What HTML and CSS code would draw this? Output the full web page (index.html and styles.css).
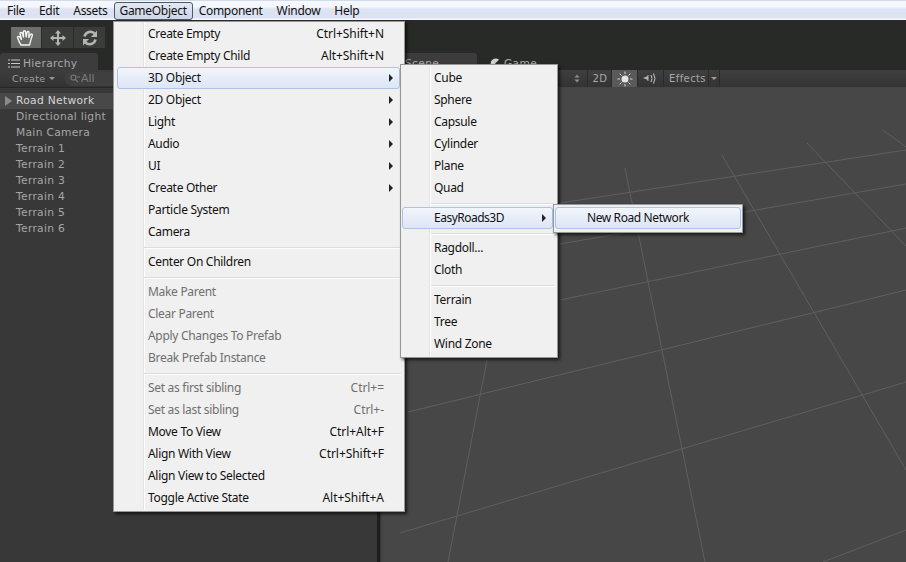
FILE: index.html
```html
<!DOCTYPE html>
<html lang="en">
<head>
<meta charset="utf-8">
<title>Unity GameObject menu</title>
<link rel="stylesheet" href="styles.css">
</head>
<body>
<div class="app">
  <header class="menubar">
    <span class="mb-item">File</span>
    <span class="mb-item">Edit</span>
    <span class="mb-item">Assets</span>
    <span class="mb-item mb-open">GameObject</span>
    <span class="mb-item">Component</span>
    <span class="mb-item">Window</span>
    <span class="mb-item">Help</span>
  </header>

  <div class="toolbar">
    <div class="tool tool-on">
      <svg width="20" height="20" viewBox="0 0 20 20"><path d="M5 17 C3 14 2 11 1.500 9.500 C1.500 8 3.500 8 4.500 10 L5.500 11.500 L4 5.500 C4 4 5.800 4 6.200 5.300 L7.500 9 L7.300 3.800 C7.500 2.300 9.300 2.400 9.500 3.800 L10.200 9 L11 4.300 C11.300 3 13 3.200 13 4.600 L12.800 9.500 L14.500 6.500 C15.300 5.500 16.800 6.200 16.300 7.500 L14.800 12 C14.500 14 14 15.500 13.500 17 Z" fill="none" stroke="#f2f2f2" stroke-width="1.400" stroke-linejoin="round"/></svg>
    </div>
    <div class="tool">
      <svg width="18" height="18" viewBox="0 0 18 18"><path d="M9 1 L12 4.500 H10 V8 H13.500 V6 L17 9 L13.500 12 V10 H10 V13.500 H12 L9 17 L6 13.500 H8 V10 H4.500 V12 L1 9 L4.500 6 V8 H8 V4.500 H6 Z" fill="#b4b4b4"/></svg>
    </div>
    <div class="tool">
      <svg width="18" height="18" viewBox="0 0 18 18"><path d="M3.500 7.500 A6 6 0 0 1 14 5" fill="none" stroke="#b4b4b4" stroke-width="2.600"/><path d="M16 1.500 V8 H10 Z" fill="#b4b4b4"/><path d="M14.500 10.500 A6 6 0 0 1 4 13" fill="none" stroke="#b4b4b4" stroke-width="2.600"/><path d="M2 16.500 V10 H8 Z" fill="#b4b4b4"/></svg>
    </div>
  </div>

  <main class="panels">
    <section class="hierarchy">
      <div class="tabstrip">
        <div class="tab tab-h">
          <svg width="12" height="9" viewBox="0 0 12 9"><path d="M3 1 H12 M3 4.500 H12 M3 8 H12" stroke="#c8c8c8" fill="none"/><path d="M0 1 H2 M0 4.500 H2 M0 8 H2" stroke="#c8c8c8" fill="none"/></svg>
          <span>Hierarchy</span>
        </div>
      </div>
      <div class="h-bar">
        <span class="create">Create <i class="caret"></i></span>
        <span class="search">
          <svg width="10" height="9" viewBox="0 0 10 9"><circle cx="3.500" cy="3.500" r="2.500" fill="none" stroke="#7a7a7a" stroke-width="1.200"/><path d="M5.500 5.500 L8 8 M7 3 H10" stroke="#7a7a7a" stroke-width="1.200"/></svg>
          All
        </span>
      </div>
      <ul class="tree">
        <li class="tree-row tree-sel"><i class="tree-arrow"></i>Road Network</li>
        <li class="tree-row">Directional light</li>
        <li class="tree-row">Main Camera</li>
        <li class="tree-row">Terrain 1</li>
        <li class="tree-row">Terrain 2</li>
        <li class="tree-row">Terrain 3</li>
        <li class="tree-row">Terrain 4</li>
        <li class="tree-row">Terrain 5</li>
        <li class="tree-row">Terrain 6</li>
      </ul>
    </section>

    <section class="scene">
      <div class="tabstrip tabstrip-scene">
        <div class="tab tab-scene">Scene</div>
        <div class="tab-game">
          <svg width="10" height="11" viewBox="0 0 10 11"><path d="M9 1.800 A5 5 0 1 0 9 9.200 L5 5.500 Z" fill="#d0d0d0"/></svg>
          <span>Game</span>
        </div>
      </div>
      <div class="s-bar">
        <span class="s-updown">
          <svg width="6" height="9" viewBox="0 0 6 9"><path d="M3 0.500 L5.500 3.500 H0.500 Z M3 8.500 L5.500 5.500 H0.500 Z" fill="#8d8d8d"/></svg>
        </span>
        <span class="s-btn s-2d">2D</span>
        <span class="s-btn s-sun">
          <svg width="16" height="16" viewBox="0 0 16 16"><circle cx="8" cy="8" r="3.500" fill="#e6e6e6"/><path d="M8 0.500 V3 M8 13 V15.500 M0.500 8 H3 M13 8 H15.500 M2.700 2.700 L4.500 4.500 M11.500 11.500 L13.300 13.300 M2.700 13.300 L4.500 11.500 M11.500 4.500 L13.300 2.700" stroke="#d8d8d8"/></svg>
        </span>
        <span class="s-btn s-audio">
          <svg width="15" height="13" viewBox="0 0 15 13"><path d="M0 6 L5 4 V8 Z" fill="#b4b4b4"/><path d="M5 3 V9" stroke="#b4b4b4"/><path d="M8 3 Q10 6.500 8 10 M10.500 1.500 Q13.500 6.500 10.500 11.500" fill="none" stroke="#c8c8c8"/></svg>
        </span>
        <span class="s-btn s-effects">Effects</span>
        <span class="s-btn s-caret"><i class="caret"></i></span>
      </div>
      <div class="viewport">
        <svg class="grid" viewBox="380 87 526 475" width="526" height="475">
          <g stroke="#5f5f5f" stroke-width="1" fill="none">
            <path d="M560 203 L906 150"/>
            <path d="M560 244 L906 184"/>
            <path d="M560 300 L906 228"/>
            <path d="M408 412 L906 290"/>
            <path d="M400 533 L906 382"/>
            <path d="M823 562 L906 530"/>
            <path d="M487 360 L448 562"/>
            <path d="M625 168 L705 562"/>
            <path d="M722 155 L906 470"/>
            <path d="M807 143 L906 246"/>
            <path d="M883 130 L906 147"/>
          </g>
        </svg>
      </div>
    </section>
  </main>

  <nav class="menu menu-main">
    <div class="mi"><span>Create Empty</span><span class="sc">Ctrl+Shift+N</span></div>
    <div class="mi"><span>Create Empty Child</span><span class="sc">Alt+Shift+N</span></div>
    <div class="mi mi-hot"><span>3D Object</span><i class="sub"></i></div>
    <div class="mi"><span>2D Object</span><i class="sub"></i></div>
    <div class="mi"><span>Light</span><i class="sub"></i></div>
    <div class="mi"><span>Audio</span><i class="sub"></i></div>
    <div class="mi"><span>UI</span><i class="sub"></i></div>
    <div class="mi"><span>Create Other</span><i class="sub"></i></div>
    <div class="mi"><span>Particle System</span></div>
    <div class="mi"><span>Camera</span></div>
    <div class="sep"></div>
    <div class="mi"><span>Center On Children</span></div>
    <div class="sep"></div>
    <div class="mi mi-off"><span>Make Parent</span></div>
    <div class="mi mi-off"><span>Clear Parent</span></div>
    <div class="mi mi-off"><span>Apply Changes To Prefab</span></div>
    <div class="mi mi-off"><span>Break Prefab Instance</span></div>
    <div class="sep"></div>
    <div class="mi mi-off"><span>Set as first sibling</span><span class="sc">Ctrl+=</span></div>
    <div class="mi mi-off"><span>Set as last sibling</span><span class="sc">Ctrl+-</span></div>
    <div class="mi"><span>Move To View</span><span class="sc">Ctrl+Alt+F</span></div>
    <div class="mi"><span>Align With View</span><span class="sc">Ctrl+Shift+F</span></div>
    <div class="mi"><span>Align View to Selected</span></div>
    <div class="mi"><span>Toggle Active State</span><span class="sc">Alt+Shift+A</span></div>
  </nav>

  <nav class="menu menu-3d">
    <div class="mi"><span>Cube</span></div>
    <div class="mi"><span>Sphere</span></div>
    <div class="mi"><span>Capsule</span></div>
    <div class="mi"><span>Cylinder</span></div>
    <div class="mi"><span>Plane</span></div>
    <div class="mi"><span>Quad</span></div>
    <div class="sep"></div>
    <div class="mi mi-hot"><span>EasyRoads3D</span><i class="sub"></i></div>
    <div class="sep"></div>
    <div class="mi"><span>Ragdoll...</span></div>
    <div class="mi"><span>Cloth</span></div>
    <div class="sep"></div>
    <div class="mi"><span>Terrain</span></div>
    <div class="mi"><span>Tree</span></div>
    <div class="mi"><span>Wind Zone</span></div>
  </nav>

  <nav class="menu menu-road">
    <div class="mi mi-hot"><span>New Road Network</span></div>
  </nav>
</div>
</body>
</html>
```
FILE: styles.css
```css
* { box-sizing: border-box; }
html, body { margin: 0; padding: 0; height: 100%; overflow: hidden; }
body { background: #282a28; font-family: "Noto Sans", sans-serif; font-size: 12px; letter-spacing: -0.3px; color: #111; }
ul { list-style: none; margin: 0; padding: 0; }
i { display: block; font-style: normal; }

.app { position: relative; width: 906px; height: 562px; display: flex; flex-direction: column; overflow: hidden; }

/* menu bar */
.menubar {
  height: 21px; display: flex; align-items: flex-start; padding-top: 1px;
  background: linear-gradient(#f6f8fc 0, #f4f6fb 6px, #dde3f3 8px, #dce2f2 17px, #f8f9fd 18px, #f8f9fd 19px, #282a28 19px);
  border-top: 1px solid #cfdcec;
}
.mb-item { height: 18px; line-height: 16px; padding: 0 7px; border: 1px solid transparent; margin: 0 -1px; }
.mb-open { padding: 0 5px; background: linear-gradient(#e4e8f3, #cdd5e8); border: 1px solid #4d5a6a; border-radius: 3px; }

/* toolbar */
.toolbar { height: 32px; display: flex; align-items: flex-start; padding: 6px 0 0 11px; background: #282a28; }
.tool { width: 32px; height: 21px; display: flex; align-items: center; justify-content: center; background: #3a3c3a; border-right: 1px solid #2a2a2a; }
.tool-on { width: 31px; background: linear-gradient(#6e706e, #666866); }

.panels { flex: 1; display: flex; min-height: 0; }
.hierarchy { width: 380px; display: flex; flex-direction: column; background: #383838; border-right: 3px solid #1e1e1e; font-family: "DejaVu Sans", sans-serif; }
.scene { flex: 1; display: flex; flex-direction: column; min-width: 0; font-family: "DejaVu Sans", sans-serif; }

.tabstrip { height: 17px; display: flex; background: #282a28; flex: none; }
.tab { background: #3c3c3c; border-radius: 3px 3px 0 0; color: #a8a8a8; font-size: 10.700px; letter-spacing: 0.3px; }
.tab-h { width: 98px; display: flex; align-items: center; gap: 3px; padding: 3px 0 0 8px; }
.tab-scene { width: 97px; padding: 4px 0 0 25px; line-height: 14px; }
.tab-game { display: flex; align-items: center; gap: 4px; padding: 3px 0 0 13px; color: #a8a8a8; font-size: 10.700px; letter-spacing: 0.3px; }

.h-bar { height: 18px; display: flex; align-items: center; padding-left: 12px; background: linear-gradient(#3d3d3d, #333); border-bottom: 1px solid #262626; flex: none; color: #a0a0a0; font-size: 9.500px; letter-spacing: 0.3px; }
.create { display: flex; align-items: center; gap: 4px; width: 53px; }
.caret { width: 0; height: 0; border-left: 3px solid transparent; border-right: 3px solid transparent; border-top: 3px solid #9a9a9a; }
.search { display: flex; align-items: center; gap: 1px; width: 48px; height: 14px; padding-left: 5px; border-radius: 7px 0 0 7px; background: #3f3f3f; color: #7a7a7a; font-size: 11px; letter-spacing: 0; }

.tree { padding-top: 5px; }
.tree-row { position: relative; height: 16px; line-height: 16px; padding-left: 16px; color: #a6a6a6; font-size: 10.700px; letter-spacing: 0.3px; }
.tree-sel { background: #484848; color: #d6d6d6; }
.tree-arrow { position: absolute; left: 5px; top: 3px; width: 0; height: 0; border-top: 5px solid transparent; border-bottom: 5px solid transparent; border-left: 7px solid #8a8a8a; }

.s-bar { height: 17px; display: flex; align-items: stretch; padding-left: 187px; background: linear-gradient(#3f3f3f, #333); flex: none; color: #a8a8a8; font-size: 10px; letter-spacing: 0.4px; }
.s-updown { width: 21px; display: flex; align-items: center; justify-content: center; border-right: 1px solid #2a2a2a; }
.s-btn { display: flex; align-items: center; justify-content: center; border-right: 1px solid #2a2a2a; }
.s-2d { width: 24px; padding-left: 1px; }
.s-sun { width: 26px; background: #5a5a5a; }
.s-audio { width: 26px; }
.s-effects { width: 45px; padding-left: 3px; }
.s-caret { width: 11px; }

.viewport { flex: 1; position: relative; background: #474747; box-shadow: inset 2px 0 2px -1px #333; }
.grid { position: absolute; left: 0; top: 0; display: block; }

/* popup menus */
.menu {
  position: absolute; background: #f0f0f0; border: 1px solid #979797;
  box-shadow: 2px 2px 3px rgba(0,0,0,.65);
  padding: 1px 1px 2px; z-index: 2;
}
.menu::before { content: ""; position: absolute; top: 1px; bottom: 1px; width: 2px; background: linear-gradient(90deg, #e2e3e3 50%, #fff 50%); }
.menu-main { left: 113px; top: 21px; width: 292px; }
.menu-main::before { left: 29px; }
.menu-3d { left: 400px; top: 64px; width: 158px; padding-top: 2px; z-index: 3; }
.menu-3d::before { left: 28px; }
.menu-road { left: 553px; top: 204px; width: 190px; height: 29px; padding: 2px 1px; z-index: 4; }
.menu-road::before { display: none; }

.mi { position: relative; z-index: 1; height: 22px; display: flex; align-items: center; justify-content: space-between; padding: 0 18px 0 32px; border: 1px solid transparent; border-radius: 3px; white-space: nowrap; line-height: 16px; }
.mi-hot { background: linear-gradient(#f1f5fc, #dde6f5); border-color: #aec4e4; }
.mi-off { color: #6f6f6f; }
.menu-main .mi:has(.sub) { padding-right: 9px; }
.menu-main .mi-hot:has(.sub) { margin-left: 2px; margin-right: 3px; padding-left: 30px; padding-right: 6px; }
.menu-3d .mi { padding-left: 31px; padding-right: 6px; }
.menu-3d .mi-hot { margin-right: 3px; letter-spacing: -0.5px; }
.menu-road .mi { padding-left: 31px; letter-spacing: -0.4px; }
.sub { width: 0; height: 0; border-top: 4px solid transparent; border-bottom: 4px solid transparent; border-left: 4px solid #222; }
.sc { margin-left: 12px; letter-spacing: -0.05px; }

.sep { position: relative; height: 8px; margin-left: 29px; }
.sep::after { content: ""; position: absolute; left: 0; right: 2px; top: 4px; height: 2px; background: linear-gradient(#dcdcdc 50%, #fdfdfd 50%); }
```
